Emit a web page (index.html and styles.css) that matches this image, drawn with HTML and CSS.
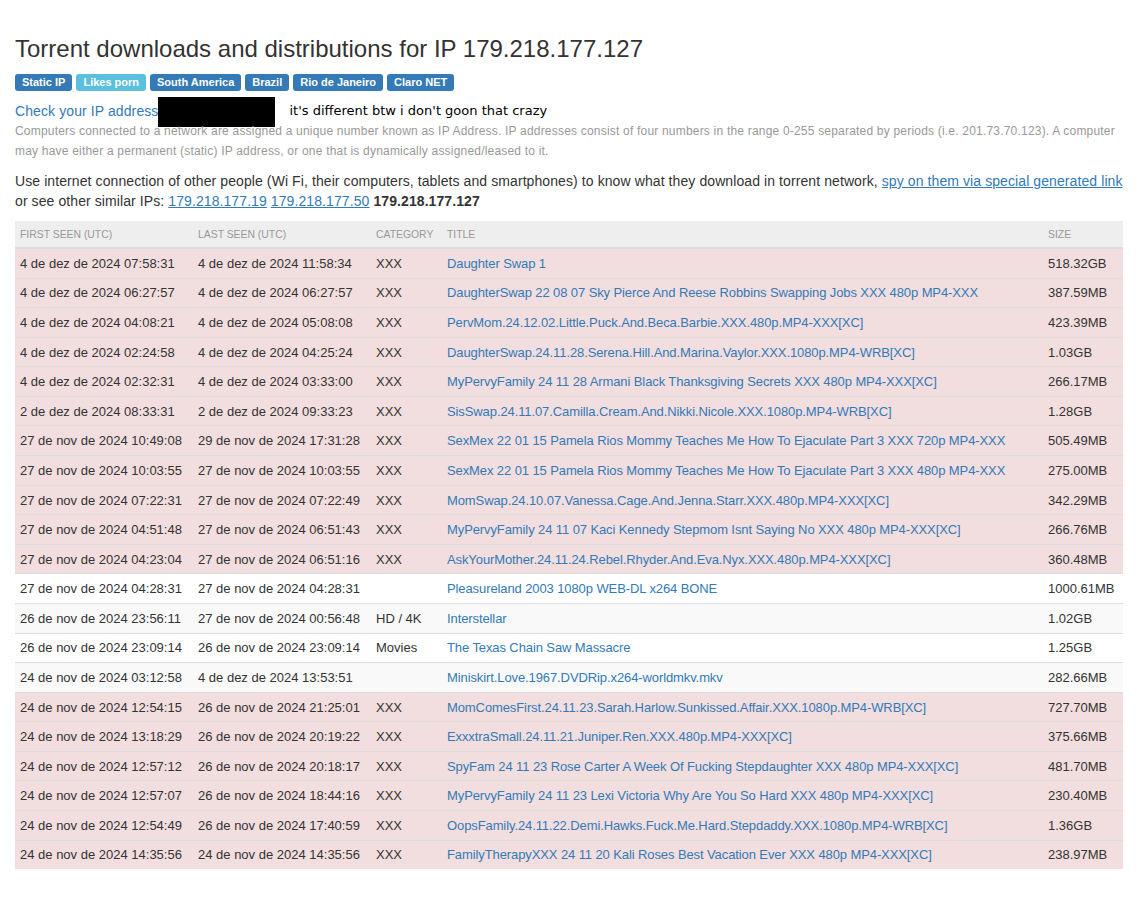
FILE: index.html
```html
<!DOCTYPE html>
<html lang="en">
<head>
<meta charset="utf-8">
<title>Torrent downloads and distributions for IP 179.218.177.127</title>
<link rel="stylesheet" href="styles.css">
</head>
<body>
<div class="container">
  <h1 class="title">Torrent downloads and distributions for IP 179.218.177.127</h1>
  <div class="labels">
    <span class="label label-primary">Static IP</span>
    <span class="label label-info">Likes porn</span>
    <span class="label label-primary">South America</span>
    <span class="label label-primary">Brazil</span>
    <span class="label label-primary">Rio de Janeiro</span>
    <span class="label label-primary">Claro NET</span>
  </div>
  <div class="ip-check"><a class="plain-link" href="#">Check your IP address</a><span class="redact"></span><span class="note">it's different btw i don't goon that crazy</span></div>
  <p class="muted">Computers connected to a network are assigned a unique number known as IP Address. IP addresses consist of four numbers in the range 0-255 separated by periods (i.e. 201.73.70.123). A computer may have either a permanent (static) IP address, or one that is dynamically assigned/leased to it.</p>
  <p class="intro">Use internet connection of other people (Wi Fi, their computers, tablets and smartphones) to know what they download in torrent network, <a href="#">spy on them via special generated link</a><br>or see other similar IPs: <a href="#">179.218.177.19</a> <a href="#">179.218.177.50</a> <b>179.218.177.127</b></p>

  <table class="torrents">
    <colgroup>
      <col class="c-first"><col class="c-last"><col class="c-cat"><col class="c-title"><col class="c-size">
    </colgroup>
    <thead>
      <tr><th>First seen (UTC)</th><th>Last seen (UTC)</th><th>Category</th><th>Title</th><th>Size</th></tr>
    </thead>
    <tbody>
      <tr class="danger"><td>4 de dez de 2024 07:58:31</td><td>4 de dez de 2024 11:58:34</td><td>XXX</td><td><a href="#">Daughter Swap 1</a></td><td>518.32GB</td></tr>
      <tr class="danger"><td>4 de dez de 2024 06:27:57</td><td>4 de dez de 2024 06:27:57</td><td>XXX</td><td><a href="#">DaughterSwap 22 08 07 Sky Pierce And Reese Robbins Swapping Jobs XXX 480p MP4-XXX</a></td><td>387.59MB</td></tr>
      <tr class="danger"><td>4 de dez de 2024 04:08:21</td><td>4 de dez de 2024 05:08:08</td><td>XXX</td><td><a href="#">PervMom.24.12.02.Little.Puck.And.Beca.Barbie.XXX.480p.MP4-XXX[XC]</a></td><td>423.39MB</td></tr>
      <tr class="danger"><td>4 de dez de 2024 02:24:58</td><td>4 de dez de 2024 04:25:24</td><td>XXX</td><td><a href="#">DaughterSwap.24.11.28.Serena.Hill.And.Marina.Vaylor.XXX.1080p.MP4-WRB[XC]</a></td><td>1.03GB</td></tr>
      <tr class="danger"><td>4 de dez de 2024 02:32:31</td><td>4 de dez de 2024 03:33:00</td><td>XXX</td><td><a href="#">MyPervyFamily 24 11 28 Armani Black Thanksgiving Secrets XXX 480p MP4-XXX[XC]</a></td><td>266.17MB</td></tr>
      <tr class="danger"><td>2 de dez de 2024 08:33:31</td><td>2 de dez de 2024 09:33:23</td><td>XXX</td><td><a href="#">SisSwap.24.11.07.Camilla.Cream.And.Nikki.Nicole.XXX.1080p.MP4-WRB[XC]</a></td><td>1.28GB</td></tr>
      <tr class="danger"><td>27 de nov de 2024 10:49:08</td><td>29 de nov de 2024 17:31:28</td><td>XXX</td><td><a href="#">SexMex 22 01 15 Pamela Rios Mommy Teaches Me How To Ejaculate Part 3 XXX 720p MP4-XXX</a></td><td>505.49MB</td></tr>
      <tr class="danger"><td>27 de nov de 2024 10:03:55</td><td>27 de nov de 2024 10:03:55</td><td>XXX</td><td><a href="#">SexMex 22 01 15 Pamela Rios Mommy Teaches Me How To Ejaculate Part 3 XXX 480p MP4-XXX</a></td><td>275.00MB</td></tr>
      <tr class="danger"><td>27 de nov de 2024 07:22:31</td><td>27 de nov de 2024 07:22:49</td><td>XXX</td><td><a href="#">MomSwap.24.10.07.Vanessa.Cage.And.Jenna.Starr.XXX.480p.MP4-XXX[XC]</a></td><td>342.29MB</td></tr>
      <tr class="danger"><td>27 de nov de 2024 04:51:48</td><td>27 de nov de 2024 06:51:43</td><td>XXX</td><td><a href="#">MyPervyFamily 24 11 07 Kaci Kennedy Stepmom Isnt Saying No XXX 480p MP4-XXX[XC]</a></td><td>266.76MB</td></tr>
      <tr class="danger"><td>27 de nov de 2024 04:23:04</td><td>27 de nov de 2024 06:51:16</td><td>XXX</td><td><a href="#">AskYourMother.24.11.24.Rebel.Rhyder.And.Eva.Nyx.XXX.480p.MP4-XXX[XC]</a></td><td>360.48MB</td></tr>
      <tr><td>27 de nov de 2024 04:28:31</td><td>27 de nov de 2024 04:28:31</td><td></td><td><a href="#">Pleasureland 2003 1080p WEB-DL x264 BONE</a></td><td>1000.61MB</td></tr>
      <tr><td>26 de nov de 2024 23:56:11</td><td>27 de nov de 2024 00:56:48</td><td>HD / 4K</td><td><a href="#">Interstellar</a></td><td>1.02GB</td></tr>
      <tr><td>26 de nov de 2024 23:09:14</td><td>26 de nov de 2024 23:09:14</td><td>Movies</td><td><a href="#">The Texas Chain Saw Massacre</a></td><td>1.25GB</td></tr>
      <tr><td>24 de nov de 2024 03:12:58</td><td>4 de dez de 2024 13:53:51</td><td></td><td><a href="#">Miniskirt.Love.1967.DVDRip.x264-worldmkv.mkv</a></td><td>282.66MB</td></tr>
      <tr class="danger"><td>24 de nov de 2024 12:54:15</td><td>26 de nov de 2024 21:25:01</td><td>XXX</td><td><a href="#">MomComesFirst.24.11.23.Sarah.Harlow.Sunkissed.Affair.XXX.1080p.MP4-WRB[XC]</a></td><td>727.70MB</td></tr>
      <tr class="danger"><td>24 de nov de 2024 13:18:29</td><td>26 de nov de 2024 20:19:22</td><td>XXX</td><td><a href="#">ExxxtraSmall.24.11.21.Juniper.Ren.XXX.480p.MP4-XXX[XC]</a></td><td>375.66MB</td></tr>
      <tr class="danger"><td>24 de nov de 2024 12:57:12</td><td>26 de nov de 2024 20:18:17</td><td>XXX</td><td><a href="#">SpyFam 24 11 23 Rose Carter A Week Of Fucking Stepdaughter XXX 480p MP4-XXX[XC]</a></td><td>481.70MB</td></tr>
      <tr class="danger"><td>24 de nov de 2024 12:57:07</td><td>26 de nov de 2024 18:44:16</td><td>XXX</td><td><a href="#">MyPervyFamily 24 11 23 Lexi Victoria Why Are You So Hard XXX 480p MP4-XXX[XC]</a></td><td>230.40MB</td></tr>
      <tr class="danger"><td>24 de nov de 2024 12:54:49</td><td>26 de nov de 2024 17:40:59</td><td>XXX</td><td><a href="#">OopsFamily.24.11.22.Demi.Hawks.Fuck.Me.Hard.Stepdaddy.XXX.1080p.MP4-WRB[XC]</a></td><td>1.36GB</td></tr>
      <tr class="danger"><td>24 de nov de 2024 14:35:56</td><td>24 de nov de 2024 14:35:56</td><td>XXX</td><td><a href="#">FamilyTherapyXXX 24 11 20 Kali Roses Best Vacation Ever XXX 480p MP4-XXX[XC]</a></td><td>238.97MB</td></tr>
    </tbody>
  </table>
</div>
</body>
</html>
```

FILE: styles.css
```css
* { box-sizing: border-box; }

html, body {
  margin: 0;
  padding: 0;
  background: #fff;
}

body {
  font-family: "Liberation Sans", Arial, Helvetica, sans-serif;
  font-size: 14px;
  line-height: 20px;
  color: #333;
}

a {
  color: #337ab7;
  text-decoration: underline;
}

.container {
  padding: 0 15px;
}

.title {
  margin: 34px 0 0;
  font-size: 24px;
  font-weight: 500;
  line-height: 30px;
  color: #333;
}

.labels {
  display: flex;
  gap: 4px;
  margin-top: 10px;
  height: 17px;
}

.label {
  display: inline-block;
  padding: 3px 7px 3px;
  font-size: 11px;
  font-weight: bold;
  line-height: 11px;
  color: #fff;
  border-radius: 3px;
  white-space: nowrap;
}

.label-primary { background: #337ab7; }
.label-info { background: #5bc0de; }

.ip-check {
  margin-top: 10px;
  height: 20px;
  display: flex;
  align-items: center;
}

.plain-link {
  text-decoration: none;
  letter-spacing: 0.1px;
}

.redact {
  display: block;
  width: 117px;
  height: 30px;
  margin: -4px 0 -6px 0;
  background: #000;
  flex: none;
}

.note {
  margin-left: 14px;
  font-family: "DejaVu Sans", sans-serif;
  font-size: 13px;
  color: #000;
}

.muted {
  margin: 0;
  font-size: 12px;
  line-height: 20px;
  color: #999;
  letter-spacing: 0.2px;
}

.intro {
  margin: 10px 0 10px;
  letter-spacing: 0.09px;
}

.torrents {
  width: 100%;
  border-collapse: collapse;
  table-layout: fixed;
  font-size: 13px;
}

.c-first { width: 178px; }
.c-last { width: 178px; }
.c-cat { width: 71px; }
.c-size { width: 80px; }

.torrents th {
  text-align: left;
  font-size: 10.4px;
  font-weight: normal;
  text-transform: uppercase;
  color: #999;
  background: #eee;
  padding: 4px 5px 2px;
  line-height: 20px;
  border-bottom: 2px solid #ddd;
}

.torrents td {
  padding: 4.9px 5px 3.7px;
  line-height: 20px;
  border-top: 1px solid #ddd;
  white-space: nowrap;
  overflow: hidden;
}

.torrents td a {
  text-decoration: none;
  letter-spacing: -0.1px;
}

.torrents tbody tr:nth-child(odd) td { background: #f9f9f9; }
.torrents tbody tr:nth-child(even) td { background: #fff; }
.torrents tbody tr.danger td { background: #f2dede; }
```
